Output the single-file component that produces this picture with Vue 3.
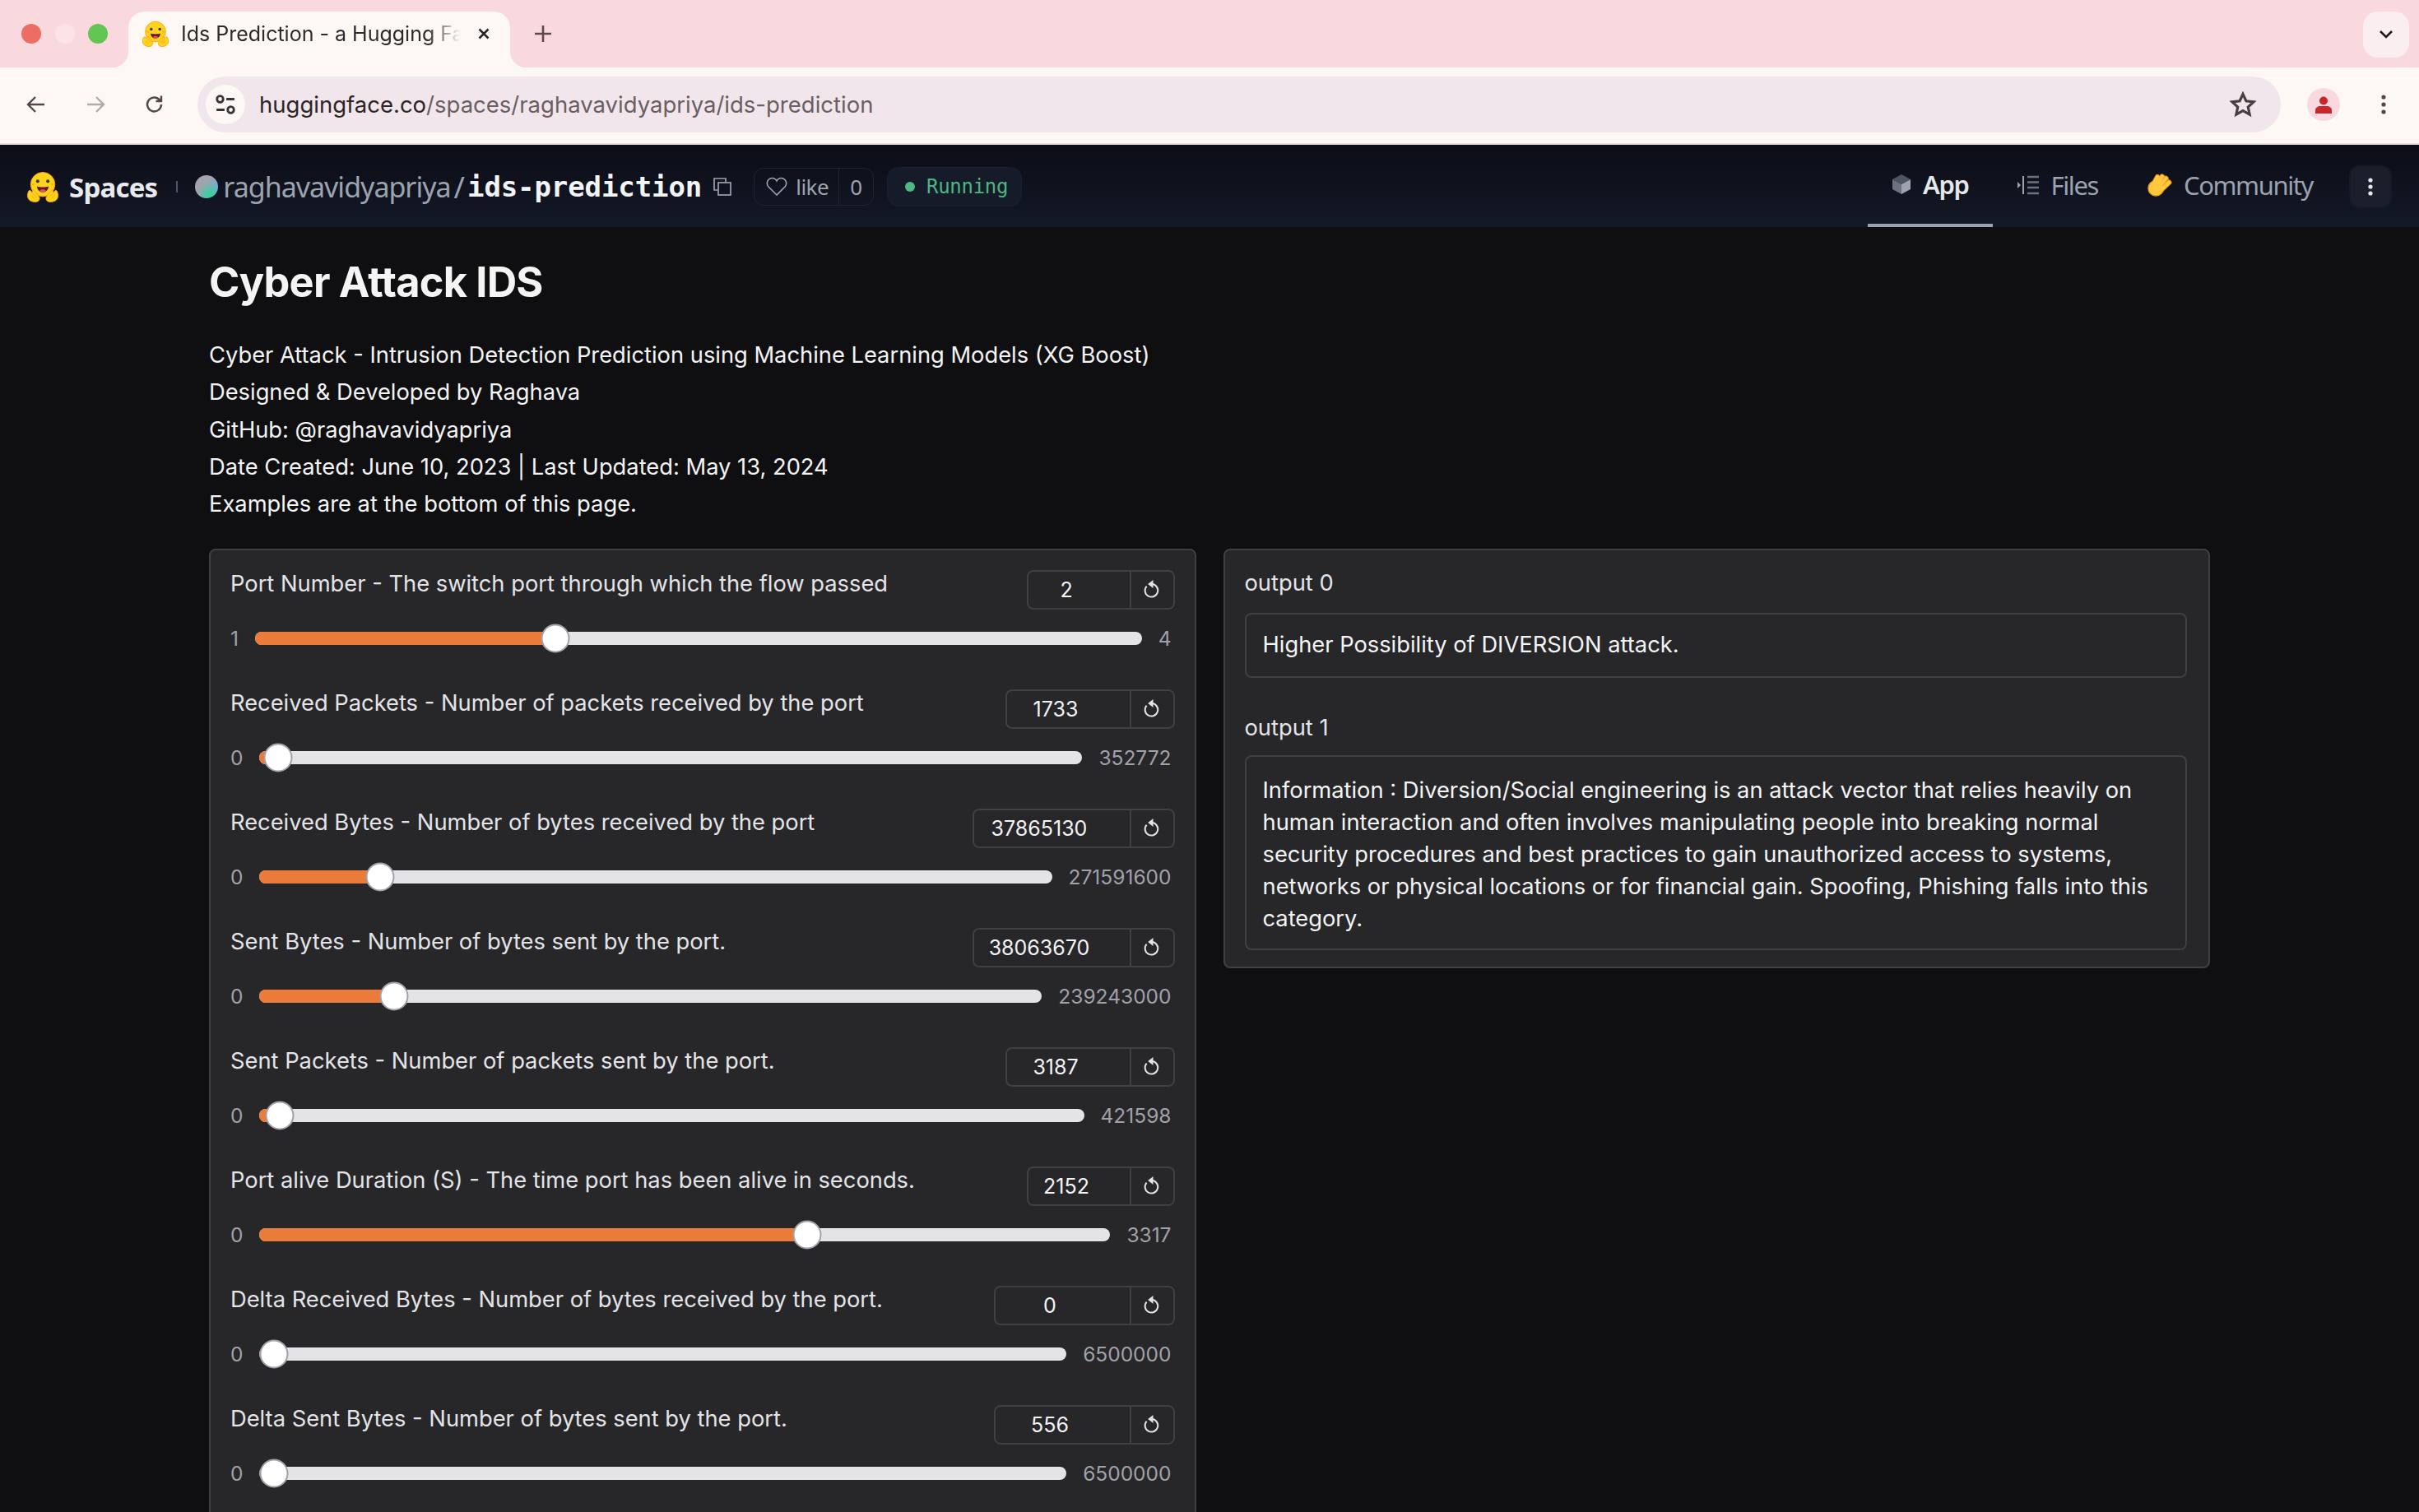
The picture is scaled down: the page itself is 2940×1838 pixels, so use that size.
<template>
  <div class="window">
    <svg width="0" height="0" class="defs">
      <defs>
        <symbol id="hug" viewBox="0 0 40 40">
          <circle cx="20" cy="17" r="15.500" fill="#ffd21e" stroke="#ff9d0b" stroke-width="1" />
          <circle cx="13.500" cy="13" r="2.200" fill="#3a3b45" />
          <circle cx="26.500" cy="13" r="2.200" fill="#3a3b45" />
          <circle cx="8" cy="17" r="1.800" fill="#ffad03" opacity=".7" />
          <circle cx="32" cy="17" r="1.800" fill="#ffad03" opacity=".7" />
          <path d="M12.500 19.500c3 1.500 12 1.500 15 0-.5 5-3.500 7.500-7.500 7.500s-7-2.500-7.500-7.500z" fill="#5c1a26" />
          <path d="M16 25c1.500-2 6.500-2 8 0-1 1.500-2.500 2-4 2s-3-.5-4-2z" fill="#f24b5d" />
          <path d="M1 28c-1.500 4 0 8 3 10 4 2 9 2 11-.5 1.500-2 1-4-.5-6l-5-6.500c-1-1.500-2.500-1-2.500.5l-.5 2-2-2.500C3 24 1.500 25 1 28z" fill="#ffd21e" stroke="#ff9d0b" stroke-width="1" />
          <path d="M39 28c1.500 4 0 8-3 10-4 2-9 2-11-.5-1.500-2-1-4 .5-6l5-6.500c1-1.500 2.500-1 2.500.5l.5 2 2-2.500C37 24 38.500 25 39 28z" fill="#ffd21e" stroke="#ff9d0b" stroke-width="1" />
          <path d="M5 31l4 4M8 29l4 4M35 31l-4 4M32 29l-4 4" stroke="#ff9d0b" stroke-width=".9" fill="none" />
        </symbol>
      </defs>
    </svg>

    <div class="tabstrip">
      <div class="lights">
        <span class="light red"></span>
        <span class="light dim"></span>
        <span class="light green"></span>
      </div>
      <div class="tab">
        <svg class="tab-icon"><use href="#hug" /></svg>
        <span class="tab-title">Ids Prediction - a Hugging Face Space</span>
        <svg class="tab-close" viewBox="0 0 16 16"><path d="M2.500 2.500l11 11M13.500 2.500l-11 11" /></svg>
      </div>
      <svg class="new-tab" viewBox="0 0 20 20"><path d="M10 0v20M0 10h20" /></svg>
      <div class="tab-search">
        <svg viewBox="0 0 16 10"><path d="M1 1l7 7 7-7" /></svg>
      </div>
    </div>

    <div class="toolbar">
      <svg class="nav" viewBox="0 0 24 24"><path d="M22 12H3M11 3l-9 9 9 9" /></svg>
      <svg class="nav off" viewBox="0 0 24 24"><path d="M2 12h19M13 3l9 9-9 9" /></svg>
      <svg class="nav reload" viewBox="0 0 24 24"><path d="M20 12a8.500 8.500 0 1 1-3-6.500L20 8M20 1.500V8h-6.500" /></svg>
      <div class="omnibox">
        <span class="site-btn">
          <svg viewBox="0 0 24 24"><circle cx="6" cy="6" r="3.500" /><path d="M13 6h9M2 18h9" /><circle cx="18" cy="18" r="3.500" /></svg>
        </span>
        <span class="url"><b>huggingface.co</b>/spaces/raghavavidyapriya/ids-prediction</span>
        <svg class="star" viewBox="0 0 24 24"><path d="M12 2.500l2.900 6.300 6.900.8-5.100 4.700 1.400 6.800-6.100-3.400-6.100 3.400 1.400-6.800-5.100-4.700 6.900-.8z" /></svg>
      </div>
      <span class="profile">
        <svg viewBox="0 0 24 24"><circle cx="12" cy="7.500" r="5" /><path d="M2 23v-4c0-3 3-5 6-5h8c3 0 6 2 6 5v4z" /></svg>
      </span>
      <svg class="dots" viewBox="0 0 6 24"><circle cx="3" cy="3" r="2.600" /><circle cx="3" cy="12" r="2.600" /><circle cx="3" cy="21" r="2.600" /></svg>
    </div>

    <header class="hf-head">
      <svg class="hf-logo"><use href="#hug" /></svg>
      <span class="hf-spaces">Spaces</span>
      <span class="sep"></span>
      <span class="avatar"></span>
      <span class="owner">raghavavidyapriya</span>
      <span class="slash">/</span>
      <span class="repo">ids-prediction</span>
      <svg class="copy" viewBox="0 0 22 22"><path d="M5 15H1V1h14v4" /><rect x="6" y="6" width="15" height="15" /></svg>
      <div class="like">
        <span class="like-main">
          <svg viewBox="0 0 26 24"><path d="M13 22L3 12C-1 7 3 1.500 7.500 1.500c2.500 0 4.500 1.500 5.500 3.500 1-2 3-3.500 5.500-3.500C23 1.500 27 7 23 12z" /></svg>
          like
        </span>
        <span class="like-count">0</span>
      </div>
      <div class="status"><i></i>Running</div>
      <nav class="hf-tabs">
        <a class="hf-tab active">
          <svg class="ic-app" viewBox="0 0 24 26"><path d="M12 1L1 7l11 6 11-6z" fill="#4b5563" /><path d="M1 7v12l11 6V13z" fill="#6b7280" /><path d="M23 7v12l-11 6V13z" fill="#9ca3af" /></svg>
          App
        </a>
        <a class="hf-tab">
          <svg class="ic-files" viewBox="0 0 28 24"><path d="M1 8l4 4-4 4z" fill="#9ca3af" /><path d="M8 1v22" stroke="#9ca3af" stroke-width="2" /><path d="M13 2h14M13 8.500h14M13 15h14M13 22h14" stroke="#6b7280" stroke-width="2.600" /></svg>
          Files
        </a>
        <a class="hf-tab">
          <svg class="ic-hand" viewBox="0 0 34 30">
            <g fill="none" stroke-linecap="round">
              <path d="M9 16L15 4.500M13 16L21 4M17 17L26 6.500M21 20L30 11.500" stroke="#ee9a1b" stroke-width="7" />
              <circle cx="13" cy="19" r="10" fill="#ffc83d" stroke="#ee9a1b" stroke-width="1.500" />
              <path d="M9 16L15 4.500M13 16L21 4M17 17L26 6.500M21 20L30 11.500" stroke="#ffc83d" stroke-width="4.600" />
            </g>
          </svg>
          Community
        </a>
      </nav>
      <button class="more">
        <svg viewBox="0 0 6 22"><circle cx="3" cy="3" r="2.600" /><circle cx="3" cy="11" r="2.600" /><circle cx="3" cy="19" r="2.600" /></svg>
      </button>
    </header>

    <main class="page">
      <h1>Cyber Attack IDS</h1>
      <div class="intro">
        <p v-for="line in intro" :key="line">{{ line }}</p>
      </div>
      <div class="columns">
        <section class="panel inputs">
          <div v-for="s in sliders" :key="s.label" class="slider">
            <div class="slider-top">
              <span class="label">{{ s.label }}</span>
              <div class="num" :style="{ width: s.box + 'px' }">
                <span class="num-value">{{ s.value }}</span>
                <span class="num-reset">
                  <svg viewBox="0 0 18 21"><path d="M2.600 7.600A7.800 7.800 0 1 0 9 5" /><path d="M10.500 0L4.200 5l6.300 5z" class="solid" /></svg>
                </span>
              </div>
            </div>
            <div class="slider-bottom">
              <span class="limit">{{ s.min }}</span>
              <div class="track">
                <div class="fill" :style="{ width: pos(s) }"></div>
                <div class="thumb" :style="{ left: pos(s) }"></div>
              </div>
              <span class="limit">{{ s.max }}</span>
            </div>
          </div>
        </section>
        <section class="panel outputs">
          <div class="out-label">output 0</div>
          <div class="out-box short">Higher Possibility of DIVERSION attack.</div>
          <div class="out-label second">output 1</div>
          <div class="out-box long">Information : Diversion/Social engineering is an attack vector that relies heavily on human interaction and often involves manipulating people into breaking normal security procedures and best practices to gain unauthorized access to systems, networks or physical locations or for financial gain. Spoofing, Phishing falls into this category.</div>
        </section>
      </div>
    </main>
  </div>
</template>

<script setup>
const intro = [
  'Cyber Attack - Intrusion Detection Prediction using Machine Learning Models (XG Boost)',
  'Designed & Developed by Raghava',
  'GitHub: @raghavavidyapriya',
  'Date Created: June 10, 2023 | Last Updated: May 13, 2024',
  'Examples are at the bottom of this page.'
]

const sliders = [
  { label: 'Port Number - The switch port through which the flow passed', value: 2, min: 1, max: 4, box: 180 },
  { label: 'Received Packets - Number of packets received by the port', value: 1733, min: 0, max: 352772, box: 206 },
  { label: 'Received Bytes - Number of bytes received by the port', value: 37865130, min: 0, max: 271591600, box: 246 },
  { label: 'Sent Bytes - Number of bytes sent by the port.', value: 38063670, min: 0, max: 239243000, box: 246 },
  { label: 'Sent Packets - Number of packets sent by the port.', value: 3187, min: 0, max: 421598, box: 206 },
  { label: 'Port alive Duration (S) - The time port has been alive in seconds.', value: 2152, min: 0, max: 3317, box: 180 },
  { label: 'Delta Received Bytes - Number of bytes received by the port.', value: 0, min: 0, max: 6500000, box: 220 },
  { label: 'Delta Sent Bytes - Number of bytes sent by the port.', value: 556, min: 0, max: 6500000, box: 220 }
]

// thumb centre runs from 17.5px to width-17.5px, same as a native range input
const pos = (s) => {
  const p = (s.value - s.min) / (s.max - s.min)
  return `calc(17.5px + (100% - 35px) * ${p})`
}
</script>

<style scoped>
.window { width: 2940px; height: 1838px; overflow: hidden; background: #0f0f11; display: flex; flex-direction: column; }
.defs { position: absolute; }

.tabstrip { height: 82px; flex: none; background: #f9d9de; display: flex; align-items: flex-start; }
.lights { display: flex; gap: 16.500px; padding: 29px 0 0 26px; width: 156px; box-sizing: border-box; flex: none; }
.light { width: 24px; height: 24px; border-radius: 50%; }
.light.red { background: #ee6d62; }
.light.dim { background: #fbe3e6; }
.light.green { background: #62c554; }
.tab { position: relative; margin-top: 14px; width: 464px; height: 68px; box-sizing: border-box; background: #fef8f5; border-radius: 20px 20px 0 0; display: flex; align-items: center; padding: 0 0 14px 17px; flex: none; }
.tab::before, .tab::after { content: ""; position: absolute; bottom: 0; width: 20px; height: 20px; }
.tab::before { left: -20px; background: radial-gradient(circle at 0 0, transparent 20px, #fef8f5 20.500px); }
.tab::after { right: -20px; background: radial-gradient(circle at 100% 0, transparent 20px, #fef8f5 20.500px); }
.tab-icon { width: 32px; height: 36px; flex: none; }
.tab-title { margin-left: 15px; width: 340px; overflow: hidden; white-space: nowrap; font: 400 25px Inter, sans-serif; color: #302a2c; -webkit-mask-image: linear-gradient(90deg, #000 88%, transparent 100%); mask-image: linear-gradient(90deg, #000 88%, transparent 100%); }
.tab-close { width: 16px; height: 16px; flex: none; margin-left: 20px; fill: none; stroke: #2c2426; stroke-width: 2.500; }
.new-tab { width: 20px; height: 20px; margin: 31px 0 0 30px; fill: none; stroke: #5a4a4e; stroke-width: 2.600; }
.tab-search { margin: 14px 12px 0 auto; width: 56px; height: 56px; border-radius: 18px; background: #fbeef0; display: flex; align-items: center; justify-content: center; }
.tab-search svg { width: 16px; height: 10px; fill: none; stroke: #1f1a1c; stroke-width: 2.600; }

.toolbar { height: 94px; flex: none; box-sizing: border-box; background: #fef8f5; border-bottom: 2px solid #ecdedd; display: flex; align-items: center; padding: 0 24px 2px 32px; }
.nav { width: 24px; height: 24px; margin-right: 48px; fill: none; stroke: #55454a; stroke-width: 2.400; flex: none; }
.nav.off { stroke: #b3a9ab; }
.nav.reload { margin-right: 40px; }
.omnibox { width: 2532px; height: 68px; border-radius: 34px; background: #f0e6eb; display: flex; align-items: center; padding: 0 30px 0 10px; box-sizing: border-box; flex: none; }
.site-btn { width: 48px; height: 48px; border-radius: 50%; background: #fef8f5; display: flex; align-items: center; justify-content: center; flex: none; }
.site-btn svg { width: 26px; height: 26px; fill: none; stroke: #3c3236; stroke-width: 2.600; }
.url { margin-left: 17px; font: 400 27.500px Inter, sans-serif; color: #6b5e63; white-space: nowrap; }
.url b { font-weight: 400; color: #2c2426; }
.star { margin-left: auto; width: 32px; height: 32px; fill: none; stroke: #4a3e42; stroke-width: 2.400; flex: none; }
.profile { margin-left: 32px; width: 40px; height: 40px; border-radius: 50%; background: #f9d9de; display: flex; align-items: center; justify-content: center; flex: none; }
.profile svg { width: 24px; height: 24px; fill: #c9272c; }
.dots { margin-left: 50px; width: 6px; height: 24px; fill: #55454a; flex: none; }

.hf-head { height: 100px; flex: none; box-sizing: border-box; background: linear-gradient(180deg, #0b0d17, #141926); display: flex; align-items: center; padding: 2px 33px 0 33px; font-family: "Noto Sans", sans-serif; color: #e5e7eb; position: relative; }
.hf-logo { width: 38px; height: 38px; flex: none; }
.hf-spaces { margin-left: 13px; font-size: 33px; font-weight: 700; color: #e9eaee; letter-spacing: -0.800px; }
.sep { margin-left: 23px; width: 2px; height: 14px; background: #4b5563; flex: none; }
.avatar { margin-left: 21px; width: 28px; height: 28px; border-radius: 50%; background: radial-gradient(circle at 65% 85%, #34d399 0, rgba(52, 211, 153, 0) 55%), linear-gradient(120deg, #a3a3ad 45%, #60a5fa 100%); flex: none; }
.owner { margin-left: 6px; font-size: 34px; color: #9ca3af; letter-spacing: -1px; }
.slash { margin: 0 3px 0 4px; font-size: 36px; color: #9ca3af; }
.repo { font: 700 34px "DejaVu Sans Mono", monospace; letter-spacing: -0.100px; color: #f3f4f6; }
.copy { margin-left: 14px; width: 22px; height: 22px; fill: none; stroke: #9ca3af; stroke-width: 1.700; flex: none; }
.like { margin-left: 27px; height: 46px; display: flex; align-items: center; border: 1.500px solid #1f2433; border-radius: 12px; font-size: 26px; color: #9ca3af; box-sizing: border-box; }
.like-main { display: flex; align-items: center; gap: 10px; padding: 0 12px 0 14px; height: 100%; border-right: 1.500px solid #1f2433; letter-spacing: -0.500px; }
.like-main svg { width: 26px; height: 24px; fill: none; stroke: #9ca3af; stroke-width: 1.600; }
.like-count { padding: 0 13px; }
.status { margin-left: 16px; height: 48px; display: flex; align-items: center; gap: 14px; padding: 0 16px 0 21px; box-sizing: border-box; background: #161b29; border: 1.500px solid #1a2030; border-radius: 14px; color: #4eb582; font: 400 24px "DejaVu Sans Mono", monospace; letter-spacing: -0.300px; }
.status i { width: 12px; height: 12px; border-radius: 50%; background: #4fb97f; }
.hf-tabs { margin-left: auto; display: flex; height: 100px; margin-top: -2px; }
.hf-tab { display: flex; align-items: center; gap: 14px; font-size: 31px; color: #9ca3af; padding: 0 29px 2px; box-sizing: border-box; letter-spacing: -1.400px; }
.hf-tab.active { color: #e5e7eb; font-weight: 600; border-bottom: 4px solid #9ca3af; padding-bottom: 0; }
.ic-app { width: 24px; height: 26px; }
.ic-files { width: 28px; height: 24px; }
.ic-hand { width: 32px; height: 28px; }
.more { margin-left: 15px; width: 52px; height: 52px; border-radius: 12px; background: #1b1f2c; border: 2px solid #151a28; display: flex; align-items: center; justify-content: center; padding: 0; }
.more svg { width: 6px; height: 22px; fill: #e5e7eb; }

.page { padding: 0 254px; font-family: Inter, sans-serif; }
h1 { margin: 38px 0 0; font-size: 50.500px; line-height: 58px; font-weight: 700; color: #f4f4f5; letter-spacing: -0.800px; }
.intro { margin-top: 37px; }
.intro p { margin: 0; font-size: 27.300px; line-height: 45.300px; color: #f4f4f5; }

.columns { display: flex; align-items: flex-start; gap: 33px; margin-top: 32px; }
.panel { background: #27272a; border: 2px solid #3f3f46; border-radius: 8px; box-sizing: border-box; width: 1200px; }
.inputs { padding: 24px 24px 300px 24px; }
.slider { height: 144.900px; }
.slider-top { display: flex; justify-content: space-between; align-items: flex-start; }
.label { font-size: 27.300px; line-height: 34px; color: #e4e4e7; }
.num { height: 48px; box-sizing: border-box; border: 2px solid #3f3f46; border-radius: 8px; display: flex; flex: none; }
.num-value { flex: 1; padding-right: 30px; text-align: center; font-size: 25px; line-height: 44px; color: #f4f4f5; }
.num-reset { width: 53px; border-left: 2px solid #3f3f46; display: flex; align-items: center; justify-content: center; flex: none; padding-bottom: 3px; box-sizing: border-box; }
.num-reset svg { width: 18px; height: 21px; fill: none; stroke: #e4e4e7; stroke-width: 2; flex: none; overflow: visible; }
.num-reset .solid { fill: #e4e4e7; stroke: none; }
.slider-bottom { display: flex; align-items: center; gap: 20px; margin-top: 17px; padding-right: 4px; height: 36px; }
.limit { font-size: 24.500px; color: #a1a1aa; flex: none; }
.track { position: relative; flex: 1; height: 16px; border-radius: 8px; background: #e4e4e7; }
.fill { height: 100%; border-radius: 8px; background: #ea7b38; }
.thumb { position: absolute; top: 50%; width: 35px; height: 35px; box-sizing: border-box; border-radius: 50%; background: #fff; border: 2px solid #a1a1aa; transform: translate(-50%, -50%); }

.outputs { padding: 23px 26px 20px 24px; }
.out-label { font-size: 27.300px; line-height: 34px; color: #e4e4e7; }
.out-label.second { margin-top: 44px; }
.out-box { margin-top: 19px; border: 2px solid #3f3f46; border-radius: 8px; font-size: 27.300px; line-height: 39px; color: #f4f4f5; padding: 18px 20px; }
.out-box.short { padding: 17px 20px 19px; }
.out-box.long { margin-top: 16px; padding: 21px 20px 17px; }
</style>

<style>
html, body { margin: 0; background: #0f0f11; overflow: hidden; }
</style>
